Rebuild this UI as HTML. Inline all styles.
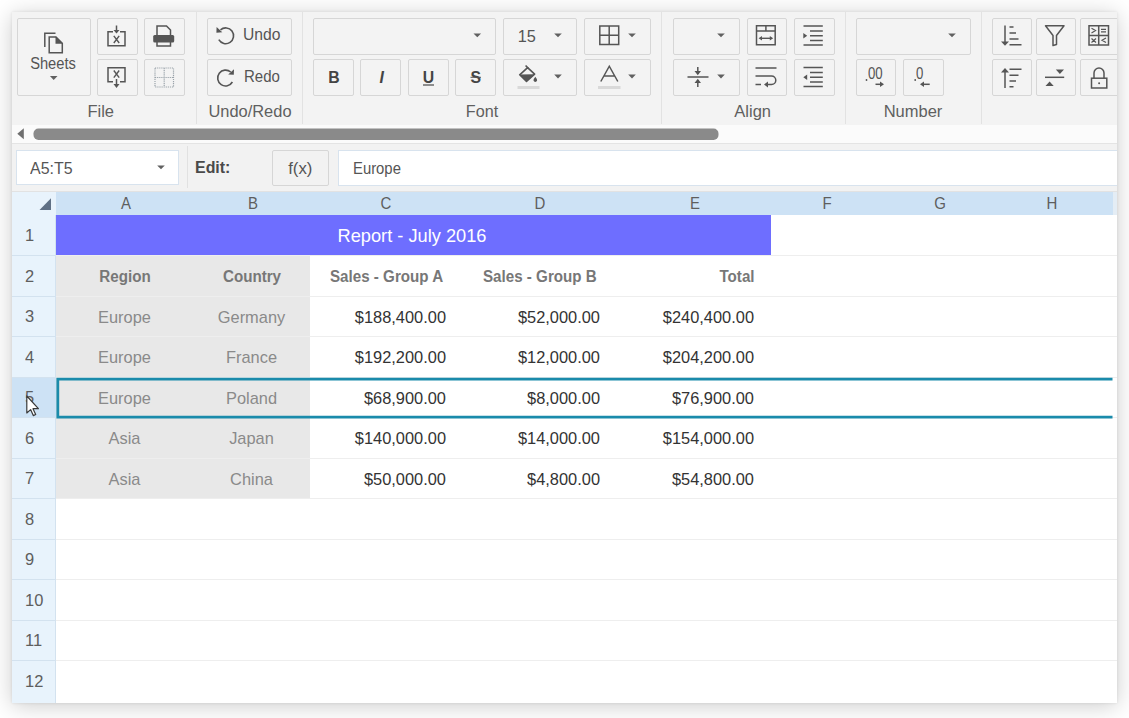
<!DOCTYPE html><html><head><meta charset="utf-8"><style>
*{box-sizing:border-box;margin:0;padding:0}
html,body{width:1129px;height:718px;overflow:hidden;background:#fff;font-family:"Liberation Sans",sans-serif;}
div{position:absolute}
.btn{border:1px solid #d6d6d6;border-radius:2px}
.sep{width:1px;background:#e2e2e2}
.t{white-space:nowrap;line-height:1}
.c{white-space:nowrap;line-height:1}
#ov{position:absolute;left:0;top:0}
</style></head><body>
<div style="left:12px;top:12px;width:1105px;height:691px;background:#f3f3f3;box-shadow:0 0 3px rgba(0,0,0,0.10),0 3px 22px rgba(0,0,0,0.2)"></div>
<div style="left:0;top:0;width:1117px;height:703px;overflow:hidden">
<div class="btn" style="left:17px;top:18px;width:74px;height:78px"></div>
<div class="btn" style="left:97px;top:18px;width:41px;height:37px"></div>
<div class="btn" style="left:144px;top:18px;width:41px;height:37px"></div>
<div class="btn" style="left:97px;top:59px;width:41px;height:37px"></div>
<div class="btn" style="left:144px;top:59px;width:41px;height:37px"></div>
<div class="sep" style="left:196px;top:12px;height:112px"></div>
<div class="t" style="left:-49.3px;width:300px;text-align:center;top:103.03px;font-size:16.5px;color:#5f5f5f;transform-origin:50% 0;">File</div>
<div class="t" style="left:-96.6px;width:300px;text-align:center;top:55.73px;font-size:15.8px;color:#555;transform:scaleX(0.93);transform-origin:50% 0;">Sheets</div>
<div class="btn" style="left:207px;top:18px;width:85px;height:37px"></div>
<div class="btn" style="left:207px;top:59px;width:85px;height:37px"></div>
<div class="sep" style="left:302px;top:12px;height:112px"></div>
<div class="t" style="left:100px;width:300px;text-align:center;top:103.03px;font-size:16.5px;color:#5f5f5f;transform:scaleX(0.995);transform-origin:50% 0;">Undo/Redo</div>
<div class="t" style="left:243.3px;top:26.23px;font-size:16.5px;color:#555;transform:scaleX(0.95);transform-origin:0 0;">Undo</div>
<div class="t" style="left:243.8px;top:68.23px;font-size:16.5px;color:#555;transform:scaleX(0.91);transform-origin:0 0;">Redo</div>
<div class="btn" style="left:313px;top:18px;width:183px;height:37px"></div>
<div class="btn" style="left:503px;top:18px;width:74px;height:37px"></div>
<div class="t" style="left:517.8px;top:27.60px;font-size:16.3px;color:#555;transform-origin:0 0;">15</div>
<div class="btn" style="left:584px;top:18px;width:67px;height:37px"></div>
<div class="btn" style="left:313px;top:59px;width:41px;height:37px"></div>
<div class="btn" style="left:360px;top:59px;width:41px;height:37px"></div>
<div class="btn" style="left:408px;top:59px;width:41px;height:37px"></div>
<div class="btn" style="left:455px;top:59px;width:41px;height:37px"></div>
<div class="t" style="left:328.3px;top:69.63px;font-size:15.8px;color:#444;font-weight:bold;transform-origin:0 0;">B</div>
<div class="t" style="left:379.5px;top:69.63px;font-size:15.8px;color:#444;font-weight:bold;transform-origin:0 0;font-style:italic;">I</div>
<div class="t" style="left:422.8px;top:69.63px;font-size:15.8px;color:#444;font-weight:bold;transform-origin:0 0;">U</div>
<div class="t" style="left:470.5px;top:69.63px;font-size:15.8px;color:#444;font-weight:bold;transform-origin:0 0;">S</div>
<div class="btn" style="left:503px;top:59px;width:74px;height:37px"></div>
<div class="btn" style="left:584px;top:59px;width:67px;height:37px"></div>
<div class="sep" style="left:661px;top:12px;height:112px"></div>
<div class="t" style="left:332px;width:300px;text-align:center;top:103.03px;font-size:16.5px;color:#5f5f5f;transform:scaleX(0.98);transform-origin:50% 0;">Font</div>
<div class="btn" style="left:673px;top:18px;width:67px;height:37px"></div>
<div class="btn" style="left:747px;top:18px;width:40px;height:37px"></div>
<div class="btn" style="left:794px;top:18px;width:41px;height:37px"></div>
<div class="btn" style="left:673px;top:59px;width:67px;height:37px"></div>
<div class="btn" style="left:747px;top:59px;width:40px;height:37px"></div>
<div class="btn" style="left:794px;top:59px;width:41px;height:37px"></div>
<div class="sep" style="left:845px;top:12px;height:112px"></div>
<div class="t" style="left:602.7px;width:300px;text-align:center;top:103.03px;font-size:16.5px;color:#5f5f5f;transform-origin:50% 0;">Align</div>
<div class="btn" style="left:856px;top:18px;width:115px;height:37px"></div>
<div class="btn" style="left:856px;top:59px;width:40px;height:37px"></div>
<div class="btn" style="left:903px;top:59px;width:41px;height:37px"></div>
<div class="t" style="left:867.5px;top:65.33px;font-size:16.5px;color:#555;transform:scaleX(0.8);transform-origin:0 0;">00</div>
<div class="t" style="left:916px;top:65.33px;font-size:16.5px;color:#555;transform:scaleX(0.8);transform-origin:0 0;">0</div>
<div class="sep" style="left:981px;top:12px;height:112px"></div>
<div class="t" style="left:763px;width:300px;text-align:center;top:103.03px;font-size:16.5px;color:#5f5f5f;transform-origin:50% 0;">Number</div>
<div class="btn" style="left:991.5px;top:18px;width:40.5px;height:37px"></div>
<div class="btn" style="left:991.5px;top:59px;width:40.5px;height:37px"></div>
<div class="btn" style="left:1036px;top:18px;width:39.5px;height:37px"></div>
<div class="btn" style="left:1036px;top:59px;width:39.5px;height:37px"></div>
<div class="btn" style="left:1080px;top:18px;width:44px;height:37px"></div>
<div class="btn" style="left:1080px;top:59px;width:44px;height:37px"></div>
<div style="left:12px;top:124.5px;width:1106px;height:18.5px;background:#fbfbfb"></div>
<div style="left:12px;top:143px;width:1106px;height:49px;background:#f2f2f2;border-top:1.5px solid #e4e4e4;border-bottom:1px solid #e2e2e2"></div>
<div style="left:16px;top:150px;width:163px;height:35px;background:#fff;border:1px solid #d8e3ee"></div>
<div class="t" style="left:29.6px;top:160.58px;font-size:16.8px;color:#555;transform:scaleX(0.95);transform-origin:0 0;">A5:T5</div>
<div style="left:187px;top:146px;width:1px;height:42px;background:#e1e1e1"></div>
<div class="t" style="left:194.9px;top:160.08px;font-size:16.8px;color:#4a4a4a;font-weight:bold;transform:scaleX(0.95);transform-origin:0 0;">Edit:</div>
<div class="btn" style="left:272px;top:150px;width:57px;height:36px"></div>
<div class="t" style="left:288.2px;top:161.08px;font-size:16.8px;color:#555;transform-origin:0 0;">f(x)</div>
<div style="left:338px;top:149.5px;width:780px;height:36px;background:#fff;border:1px solid #d8e3ee;border-right:none"></div>
<div class="t" style="left:353.1px;top:159.63px;font-size:16.5px;color:#555;transform:scaleX(0.9);transform-origin:0 0;">Europe</div>
<div style="left:12px;top:192px;width:1106px;height:511px;background:#fff"></div>
<div style="left:12px;top:192px;width:44px;height:23px;background:#e8f3fc"></div>
<div style="left:56px;top:192px;width:1056.5px;height:23px;background:#cde2f5"></div>
<div style="left:1112.5px;top:192px;width:5px;height:23px;background:#e4edf5"></div>
<div class="t" style="left:-24.5px;width:300px;text-align:center;top:195.40px;font-size:16.3px;color:#5e5e5e;transform:scaleX(0.92);transform-origin:50% 0;">A</div>
<div class="t" style="left:102.5px;width:300px;text-align:center;top:195.40px;font-size:16.3px;color:#5e5e5e;transform:scaleX(0.92);transform-origin:50% 0;">B</div>
<div class="t" style="left:235.5px;width:300px;text-align:center;top:195.40px;font-size:16.3px;color:#5e5e5e;transform:scaleX(0.92);transform-origin:50% 0;">C</div>
<div class="t" style="left:390.0px;width:300px;text-align:center;top:195.40px;font-size:16.3px;color:#5e5e5e;transform:scaleX(0.92);transform-origin:50% 0;">D</div>
<div class="t" style="left:545.0px;width:300px;text-align:center;top:195.40px;font-size:16.3px;color:#5e5e5e;transform:scaleX(0.92);transform-origin:50% 0;">E</div>
<div class="t" style="left:677.0px;width:300px;text-align:center;top:195.40px;font-size:16.3px;color:#5e5e5e;transform:scaleX(0.92);transform-origin:50% 0;">F</div>
<div class="t" style="left:790.0px;width:300px;text-align:center;top:195.40px;font-size:16.3px;color:#5e5e5e;transform:scaleX(0.92);transform-origin:50% 0;">G</div>
<div class="t" style="left:902.0px;width:300px;text-align:center;top:195.40px;font-size:16.3px;color:#5e5e5e;transform:scaleX(0.92);transform-origin:50% 0;">H</div>
<div style="left:12px;top:215px;width:44px;height:488px;background:#e8f3fc;border-right:1px solid #d3e2ef"></div>
<div style="left:12px;top:377.0px;width:44px;height:40.5px;background:#cde2f5"></div>
<div style="left:56px;top:255.5px;width:254px;height:243.0px;background:#e8e8e8"></div>
<div style="left:56px;top:215.0px;width:715px;height:40.5px;background:#6e6eff"></div>
<div style="left:12px;top:255.0px;width:44px;height:1px;background:#d3e2ef"></div>
<div style="left:56px;top:255.0px;width:1061px;height:1px;background:#eeeeee"></div>
<div style="left:12px;top:295.5px;width:44px;height:1px;background:#d3e2ef"></div>
<div style="left:56px;top:295.5px;width:1061px;height:1px;background:#eeeeee"></div>
<div style="left:12px;top:336.0px;width:44px;height:1px;background:#d3e2ef"></div>
<div style="left:56px;top:336.0px;width:1061px;height:1px;background:#eeeeee"></div>
<div style="left:12px;top:376.5px;width:44px;height:1px;background:#d3e2ef"></div>
<div style="left:56px;top:376.5px;width:1061px;height:1px;background:#eeeeee"></div>
<div style="left:12px;top:417.0px;width:44px;height:1px;background:#d3e2ef"></div>
<div style="left:56px;top:417.0px;width:1061px;height:1px;background:#eeeeee"></div>
<div style="left:12px;top:457.5px;width:44px;height:1px;background:#d3e2ef"></div>
<div style="left:56px;top:457.5px;width:1061px;height:1px;background:#eeeeee"></div>
<div style="left:12px;top:498.0px;width:44px;height:1px;background:#d3e2ef"></div>
<div style="left:56px;top:498.0px;width:1061px;height:1px;background:#eeeeee"></div>
<div style="left:12px;top:538.5px;width:44px;height:1px;background:#d3e2ef"></div>
<div style="left:56px;top:538.5px;width:1061px;height:1px;background:#eeeeee"></div>
<div style="left:12px;top:579.0px;width:44px;height:1px;background:#d3e2ef"></div>
<div style="left:56px;top:579.0px;width:1061px;height:1px;background:#eeeeee"></div>
<div style="left:12px;top:619.5px;width:44px;height:1px;background:#d3e2ef"></div>
<div style="left:56px;top:619.5px;width:1061px;height:1px;background:#eeeeee"></div>
<div style="left:12px;top:660.0px;width:44px;height:1px;background:#d3e2ef"></div>
<div style="left:56px;top:660.0px;width:1061px;height:1px;background:#eeeeee"></div>
<div class="t" style="left:25px;top:228.03px;font-size:16.8px;color:#5e5e5e;transform:scaleX(0.98);transform-origin:0 0;">1</div>
<div class="t" style="left:25px;top:268.53px;font-size:16.8px;color:#5e5e5e;transform:scaleX(0.98);transform-origin:0 0;">2</div>
<div class="t" style="left:25px;top:309.03px;font-size:16.8px;color:#5e5e5e;transform:scaleX(0.98);transform-origin:0 0;">3</div>
<div class="t" style="left:25px;top:349.53px;font-size:16.8px;color:#5e5e5e;transform:scaleX(0.98);transform-origin:0 0;">4</div>
<div class="t" style="left:25px;top:390.03px;font-size:16.8px;color:#5e5e5e;transform:scaleX(0.98);transform-origin:0 0;">5</div>
<div class="t" style="left:25px;top:430.53px;font-size:16.8px;color:#5e5e5e;transform:scaleX(0.98);transform-origin:0 0;">6</div>
<div class="t" style="left:25px;top:471.03px;font-size:16.8px;color:#5e5e5e;transform:scaleX(0.98);transform-origin:0 0;">7</div>
<div class="t" style="left:25px;top:511.53px;font-size:16.8px;color:#5e5e5e;transform:scaleX(0.98);transform-origin:0 0;">8</div>
<div class="t" style="left:25px;top:552.03px;font-size:16.8px;color:#5e5e5e;transform:scaleX(0.98);transform-origin:0 0;">9</div>
<div class="t" style="left:25px;top:592.53px;font-size:16.8px;color:#5e5e5e;transform:scaleX(0.98);transform-origin:0 0;">10</div>
<div class="t" style="left:25px;top:633.03px;font-size:16.8px;color:#5e5e5e;transform:scaleX(0.98);transform-origin:0 0;">11</div>
<div class="t" style="left:25px;top:673.53px;font-size:16.8px;color:#5e5e5e;transform:scaleX(0.98);transform-origin:0 0;">12</div>
<div class="t" style="left:262px;width:300px;text-align:center;top:226.71px;font-size:18.6px;color:#fff;transform:scaleX(0.98);transform-origin:50% 0;">Report - July 2016</div>
<div class="t" style="left:-25.5px;width:300px;text-align:center;top:268.88px;font-size:15.8px;color:#777;font-weight:bold;transform:scaleX(0.96);transform-origin:50% 0;">Region</div>
<div class="t" style="left:101.5px;width:300px;text-align:center;top:268.88px;font-size:15.8px;color:#777;font-weight:bold;transform:scaleX(0.96);transform-origin:50% 0;">Country</div>
<div class="t" style="left:329.5px;top:268.88px;font-size:15.8px;color:#777;font-weight:bold;transform:scaleX(0.96);transform-origin:0 0;">Sales - Group A</div>
<div class="t" style="left:483px;top:268.88px;font-size:15.8px;color:#777;font-weight:bold;transform:scaleX(0.96);transform-origin:0 0;">Sales - Group B</div>
<div class="t" style="right:362px;top:268.88px;font-size:15.8px;color:#777;font-weight:bold;transform:scaleX(0.96);transform-origin:100% 0;">Total</div>
<div class="t" style="left:-25.5px;width:300px;text-align:center;top:308.77px;font-size:16.4px;color:#8a8a8a;transform-origin:50% 0;">Europe</div>
<div class="t" style="left:101.5px;width:300px;text-align:center;top:308.77px;font-size:16.4px;color:#8a8a8a;transform-origin:50% 0;">Germany</div>
<div class="t" style="right:671px;top:308.77px;font-size:16.4px;color:#333;transform-origin:100% 0;">$188,400.00</div>
<div class="t" style="right:517px;top:308.77px;font-size:16.4px;color:#333;transform-origin:100% 0;">$52,000.00</div>
<div class="t" style="right:363px;top:308.77px;font-size:16.4px;color:#333;transform-origin:100% 0;">$240,400.00</div>
<div class="t" style="left:-25.5px;width:300px;text-align:center;top:349.27px;font-size:16.4px;color:#8a8a8a;transform-origin:50% 0;">Europe</div>
<div class="t" style="left:101.5px;width:300px;text-align:center;top:349.27px;font-size:16.4px;color:#8a8a8a;transform-origin:50% 0;">France</div>
<div class="t" style="right:671px;top:349.27px;font-size:16.4px;color:#333;transform-origin:100% 0;">$192,200.00</div>
<div class="t" style="right:517px;top:349.27px;font-size:16.4px;color:#333;transform-origin:100% 0;">$12,000.00</div>
<div class="t" style="right:363px;top:349.27px;font-size:16.4px;color:#333;transform-origin:100% 0;">$204,200.00</div>
<div class="t" style="left:-25.5px;width:300px;text-align:center;top:389.77px;font-size:16.4px;color:#8a8a8a;transform-origin:50% 0;">Europe</div>
<div class="t" style="left:101.5px;width:300px;text-align:center;top:389.77px;font-size:16.4px;color:#8a8a8a;transform-origin:50% 0;">Poland</div>
<div class="t" style="right:671px;top:389.77px;font-size:16.4px;color:#333;transform-origin:100% 0;">$68,900.00</div>
<div class="t" style="right:517px;top:389.77px;font-size:16.4px;color:#333;transform-origin:100% 0;">$8,000.00</div>
<div class="t" style="right:363px;top:389.77px;font-size:16.4px;color:#333;transform-origin:100% 0;">$76,900.00</div>
<div class="t" style="left:-25.5px;width:300px;text-align:center;top:430.27px;font-size:16.4px;color:#8a8a8a;transform-origin:50% 0;">Asia</div>
<div class="t" style="left:101.5px;width:300px;text-align:center;top:430.27px;font-size:16.4px;color:#8a8a8a;transform-origin:50% 0;">Japan</div>
<div class="t" style="right:671px;top:430.27px;font-size:16.4px;color:#333;transform-origin:100% 0;">$140,000.00</div>
<div class="t" style="right:517px;top:430.27px;font-size:16.4px;color:#333;transform-origin:100% 0;">$14,000.00</div>
<div class="t" style="right:363px;top:430.27px;font-size:16.4px;color:#333;transform-origin:100% 0;">$154,000.00</div>
<div class="t" style="left:-25.5px;width:300px;text-align:center;top:470.77px;font-size:16.4px;color:#8a8a8a;transform-origin:50% 0;">Asia</div>
<div class="t" style="left:101.5px;width:300px;text-align:center;top:470.77px;font-size:16.4px;color:#8a8a8a;transform-origin:50% 0;">China</div>
<div class="t" style="right:671px;top:470.77px;font-size:16.4px;color:#333;transform-origin:100% 0;">$50,000.00</div>
<div class="t" style="right:517px;top:470.77px;font-size:16.4px;color:#333;transform-origin:100% 0;">$4,800.00</div>
<div class="t" style="right:363px;top:470.77px;font-size:16.4px;color:#333;transform-origin:100% 0;">$54,800.00</div>
<svg id="ov" width="1129" height="718" viewBox="0 0 1129 718"><path d="M44.8,47 V33.2 H55.5" fill="none" stroke="#555" stroke-width="1.5"/><path d="M49.2,37 H56 L62.3,43.3 V52.8 H49.2 Z" fill="none" stroke="#555" stroke-width="1.5"/><path d="M55.5,36.5 L62.8,43.8 H55.5 Z" fill="#555"/><path d="M49.900000000000006,76.1 h7.6 l-3.8,3.9 z" fill="#606060"/><path d="M113,31.8 H108 V45.8 H125 V31.8 H120" fill="none" stroke="#555" stroke-width="1.5"/><path d="M116.5,25.5 V31" stroke="#555" stroke-width="1.5"/><path d="M113.5,30 H119.5 L116.5,33.5 Z" fill="#555"/><path d="M113.8,35.8 L119.2,43 M119.2,35.8 L113.8,43" stroke="#555" stroke-width="1.4"/><path d="M113,81.8 H108 V67.8 H125 V81.8 H120" fill="none" stroke="#555" stroke-width="1.5"/><path d="M116.5,79 V85" stroke="#555" stroke-width="1.5"/><path d="M113.5,84 H119.5 L116.5,88 Z" fill="#555"/><path d="M113.8,70.5 L119.2,77.7 M119.2,70.5 L113.8,77.7" stroke="#555" stroke-width="1.4"/><path d="M157,35.5 V26 H166.5 L170.5,30 V35.5" fill="none" stroke="#555" stroke-width="1.5"/><rect x="153.2" y="35" width="21" height="7.5" rx="1.5" fill="#555"/><path d="M157,42 V46 H170.5 V42" fill="none" stroke="#555" stroke-width="1.5"/><path d="M155,68 H173.5 V87 H155 Z M164.2,68 V87 M155,77.5 H173.5" fill="none" stroke="#9aa3aa" stroke-width="1.2" stroke-dasharray="1.2,0.9"/><path d="M220.5,29.8 A7.9,7.9 0 1 1 218.8,39.7" fill="none" stroke="#555" stroke-width="1.6"/><path d="M216.6,27.1 L216.4,32.8 L222.3,32.2 Z" fill="#555"/><path d="M230.7,72 A7.9,7.9 0 1 0 232.4,82" fill="none" stroke="#555" stroke-width="1.6"/><path d="M234,69.2 L233.8,74.8 L228.2,74.4 Z" fill="#555"/><path d="M473.5,33.4 h7.6 l-3.8,3.9 z" fill="#606060"/><path d="M554.2,33.4 h7.6 l-3.8,3.9 z" fill="#606060"/><path d="M628.2,33.4 h7.6 l-3.8,3.9 z" fill="#606060"/><path d="M599.8,26 H618.7 V44.5 H599.8 Z M609.2,26 V44.5 M599.8,35.3 H618.7" fill="none" stroke="#555" stroke-width="1.5"/><path d="M423,85 H434" stroke="#555" stroke-width="1.3"/><path d="M470.5,77.3 H481" stroke="#555" stroke-width="1"/><path d="M554.2,74.6 h7.6 l-3.8,3.9 z" fill="#606060"/><path d="M525.6,65.5 L528.2,68.3" stroke="#555" stroke-width="1.6" fill="none"/><path d="M527.6,67.6 L534.6,74.2 L526.5,81.4 L519.7,74.8 Z" fill="none" stroke="#555" stroke-width="1.6" stroke-linejoin="round"/><path d="M519.7,74.6 L534.4,74.3 L526.5,81.4 Z" fill="#555"/><path d="M535.3,76.8 Q537.6,79.6 537.1,80.6 A1.9,1.9 0 0 1 533.5,80.6 Q533.0,79.6 535.3,76.8 Z" fill="#555"/><rect x="517.5" y="86" width="22" height="3" fill="#d9d9d9"/><path d="M628.2,74.6 h7.6 l-3.8,3.9 z" fill="#606060"/><path d="M600.8,81.5 L609.3,66.2 L617.8,81.5 M603.8,76 H614.8" fill="none" stroke="#555" stroke-width="1.5"/><rect x="598" y="86" width="22.5" height="3" fill="#d9d9d9"/><path d="M717.2,33.4 h7.6 l-3.8,3.9 z" fill="#606060"/><path d="M756.5,25.8 H775.2 V44.8 H756.5 Z M756.5,31 H775.2 M765.9,25.8 V31" fill="none" stroke="#555" stroke-width="1.5"/><path d="M761,38.3 H771" stroke="#555" stroke-width="1.4"/><path d="M758.6,38.3 L762,36 V40.6 Z M773.2,38.3 L769.8,36 V40.6 Z" fill="#555"/><path d="M803.5,26 H822.8 M810,31 H822.8 M810,35.7 H822.8 M810,40.4 H822.8 M803.5,45 H822.8" stroke="#555" stroke-width="1.5"/><path d="M803.3,33 L807.2,35.7 L803.3,38.4 Z" fill="#555"/><path d="M717.2,74.6 h7.6 l-3.8,3.9 z" fill="#606060"/><path d="M687.5,77 H708.5 M697.8,67 V74 M697.8,80 V87" stroke="#555" stroke-width="1.5"/><path d="M694.5,71 H701 L697.8,75.3 Z M694.5,83 H701 L697.8,78.7 Z" fill="#555"/><path d="M755.5,68 H776.5 M755.5,76 H771.5 A4.3,4.3 0 0 1 771.5,84.6 H767 M755.5,84.6 H761" fill="none" stroke="#555" stroke-width="1.5"/><path d="M764,84.6 L768,81.6 V87.6 Z" fill="#555"/><path d="M803.5,67.5 H822.8 M810,72.5 H822.8 M810,77.2 H822.8 M810,81.9 H822.8 M803.5,86.5 H822.8" stroke="#555" stroke-width="1.5"/><path d="M807.2,74.5 L803.3,77.2 L807.2,79.9 Z" fill="#555"/><path d="M948.2,33.4 h7.6 l-3.8,3.9 z" fill="#606060"/><circle cx="866.5" cy="80" r="0.9" fill="#555"/><path d="M875.5,84.3 H881" stroke="#555" stroke-width="1.5"/><path d="M880,81.5 L884,84.3 L880,87.1 Z" fill="#555"/><circle cx="915.2" cy="80" r="0.9" fill="#555"/><path d="M923,84.3 H929.7" stroke="#555" stroke-width="1.5"/><path d="M924,81.5 L920,84.3 L924,87.1 Z" fill="#555"/><path d="M1005,25.5 V42" stroke="#555" stroke-width="1.5"/><path d="M1001,41.5 H1009 L1005,45.8 Z" fill="#555"/><path d="M1009.5,27 H1013.5 M1009.5,33 H1016 M1009.5,39 H1018.5 M1009.5,44.8 H1021.5" stroke="#555" stroke-width="1.5"/><path d="M1045.5,25.8 H1064 L1056.5,35.5 V44.5 L1053,45.5 V35.5 Z" fill="none" stroke="#555" stroke-width="1.5" stroke-linejoin="round"/><path d="M1089,25.8 H1108.5 V45 H1089 Z M1098.7,25.8 V45 M1089,35.4 H1108.5" fill="none" stroke="#555" stroke-width="1.5"/><path d="M1091.5,28.3 L1095.5,30.6 L1091.5,32.9 M1101,29.3 H1106 M1101,31.9 H1106 M1106,38 L1102,40.3 L1106,42.6 M1091.5,38.5 L1096,42.5 M1096,38.5 L1091.5,42.5" fill="none" stroke="#555" stroke-width="1.2"/><path d="M1005,71.5 V88" stroke="#555" stroke-width="1.5"/><path d="M1001,72.5 H1009 L1005,68 Z" fill="#555"/><path d="M1009.5,69.3 H1021.5 M1009.5,75.2 H1018.5 M1009.5,81 H1016 M1009.5,86.8 H1013.5" stroke="#555" stroke-width="1.5"/><path d="M1045,77.3 H1064.2" stroke="#555" stroke-width="1.5"/><path d="M1055.8,69.5 H1064 L1059.9,74 Z M1045.5,86 H1053.7 L1049.6,81.5 Z" fill="#555"/><path d="M1094,78.5 V73 A5,5 0 0 1 1104,73 V78.5" fill="none" stroke="#555" stroke-width="1.5"/><rect x="1091.5" y="78.2" width="15.3" height="9.8" fill="none" stroke="#555" stroke-width="1.5"/><circle cx="1099.1" cy="83.2" r="1" fill="#555"/><path d="M17.3,133.8 L23.8,128.3 V139.3 Z" fill="#6f6f6f"/><rect x="33.5" y="128.5" width="685" height="11.5" rx="5" fill="#8a8a8a"/><path d="M157.2,165.4 h7.6 l-3.8,3.9 z" fill="#606060"/><path d="M39.5,210 L51,198.3 V210 Z" fill="#5f7085"/><path d="M1112.5,379.1 H57.8 V417.1 H1112.5" fill="none" stroke="#1a8bab" stroke-width="2.8"/><path d="M26.8,396 V413 L30.6,409.6 L33.3,415.6 L35.7,414.5 L33,408.7 L38.4,408.7 Z" fill="#fff" stroke="#3a3a3a" stroke-width="1.2" stroke-linejoin="round"/></svg>
</div>
</body></html>
